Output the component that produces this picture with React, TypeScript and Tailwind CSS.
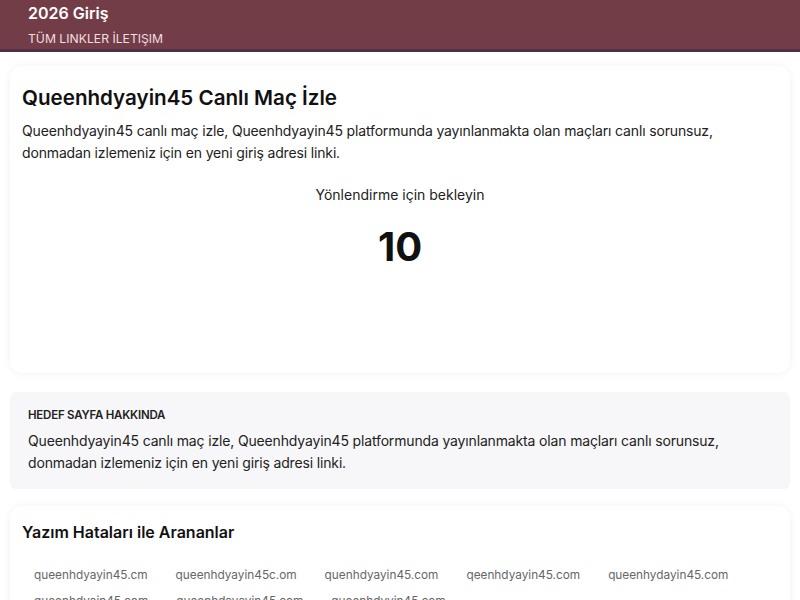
const typos = [
  'queenhdyayin45.cm',
  'queenhdyayin45c.om',
  'quenhdyayin45.com',
  'qeenhdyayin45.com',
  'queenhydayin45.com',
  'queenhdyain45.com',
  'queenhdayayin45.com',
  'queenhdyyin45.com',
];

const intro =
  'Queenhdyayin45 canlı maç izle, Queenhdyayin45 platformunda yayınlanmakta olan maçları canlı sorunsuz, donmadan izlemeniz için en yeni giriş adresi linki.';

export default function App() {
  return (
    <div className="min-h-[600px] bg-white font-['Inter',sans-serif] text-[#1a1a1a]">
      {/* Header */}
      <header className="h-[52px] bg-[#733d48] border-b-[3px] border-[#4e3048] px-7">
        <div className="pt-[3px] text-[16px] leading-5 font-semibold text-white">2026 Giriş</div>
        <nav className="mt-2 text-[12.2px] leading-4 text-[#f0dde1]">TÜM LINKLER İLETIŞIM</nav>
      </header>

      <main className="px-[10px]">
        {/* Redirect card */}
        <section className="mt-[14px] h-[307px] rounded-xl bg-white px-3 pt-[18px] shadow-[0_0_10px_rgba(0,0,0,0.06)]">
          <h1 className="text-[20.6px] leading-7 font-semibold text-[#111]">Queenhdyayin45 Canlı Maç İzle</h1>
          <p className="mt-2 text-[14px] leading-[22px] tracking-[-0.011em] text-[#222]">{intro}</p>
          <p className="mt-5 text-center text-[14px] leading-[22px] text-[#222]">Yönlendirme için bekleyin</p>
          <div className="mt-[17px] text-center text-[40px] leading-[48px] font-bold text-[#111]">10</div>
        </section>

        {/* About target */}
        <section className="mt-[19px] rounded-md bg-[#f7f7f9] px-[18px] pt-[15px] pb-[15px]">
          <h2 className="text-[11.5px] leading-4 font-semibold tracking-[-0.02em] text-[#222]">HEDEF SAYFA HAKKINDA</h2>
          <p className="mt-[7px] text-[14px] leading-[22px] tracking-[-0.011em] text-[#222]">{intro}</p>
        </section>

        {/* Typos */}
        <section className="mt-[17px] rounded-xl bg-white px-3 pt-[14px] pb-4 shadow-[0_0_10px_rgba(0,0,0,0.06)]">
          <h2 className="text-[16px] leading-6 font-semibold text-[#111]">Yazım Hataları ile Arananlar</h2>
          <div className="mt-[18px] flex flex-wrap gap-x-1">
            {typos.map((t) => (
              <span key={t} className="px-3 py-1 text-[11.8px] leading-[18px] text-[#666]">
                {t}
              </span>
            ))}
          </div>
        </section>
      </main>
    </div>
  );
}
